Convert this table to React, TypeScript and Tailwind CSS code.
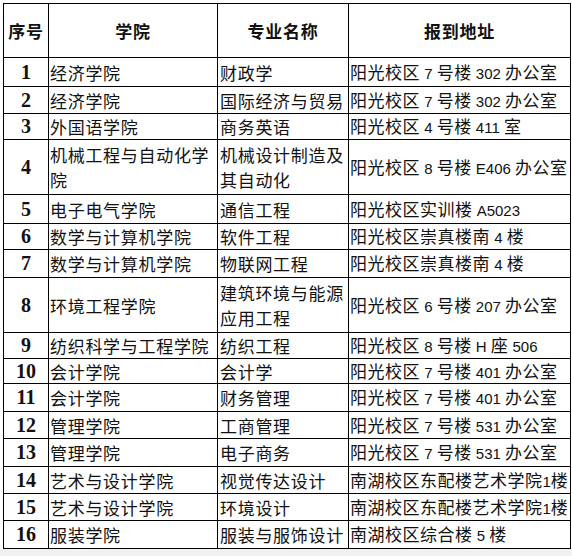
const rows = [
  { no: "1", college: "经济学院", major: "财政学", addr: "阳光校区 7 号楼 302 办公室", h: "h-[29px]" },
  { no: "2", college: "经济学院", major: "国际经济与贸易", addr: "阳光校区 7 号楼 302 办公室", h: "h-[27px]" },
  { no: "3", college: "外国语学院", major: "商务英语", addr: "阳光校区 4 号楼 411 室", h: "h-[26px]" },
  { no: "4", college: "机械工程与自动化学院", major: "机械设计制造及其自动化", addr: "阳光校区 8 号楼 E406 办公室", h: "h-[55px]" },
  { no: "5", college: "电子电气学院", major: "通信工程", addr: "阳光校区实训楼 A5023", h: "h-[29px]" },
  { no: "6", college: "数学与计算机学院", major: "软件工程", addr: "阳光校区崇真楼南 4 楼", h: "h-[26px]" },
  { no: "7", college: "数学与计算机学院", major: "物联网工程", addr: "阳光校区崇真楼南 4 楼", h: "h-[28px]" },
  { no: "8", college: "环境工程学院", major: "建筑环境与能源应用工程", addr: "阳光校区 6 号楼 207 办公室", h: "h-[55px]" },
  { no: "9", college: "纺织科学与工程学院", major: "纺织工程", addr: "阳光校区 8 号楼 H 座 506", h: "h-[26px]" },
  { no: "10", college: "会计学院", major: "会计学", addr: "阳光校区 7 号楼 401 办公室", h: "h-[25px]" },
  { no: "11", college: "会计学院", major: "财务管理", addr: "阳光校区 7 号楼 401 办公室", h: "h-[28px]" },
  { no: "12", college: "管理学院", major: "工商管理", addr: "阳光校区 7 号楼 531 办公室", h: "h-[27px]" },
  { no: "13", college: "管理学院", major: "电子商务", addr: "阳光校区 7 号楼 531 办公室", h: "h-[28px]" },
  { no: "14", college: "艺术与设计学院", major: "视觉传达设计", addr: "南湖校区东配楼艺术学院1楼", h: "h-[27px]" },
  { no: "15", college: "艺术与设计学院", major: "环境设计", addr: "南湖校区东配楼艺术学院1楼", h: "h-[27px]" },
  { no: "16", college: "服装学院", major: "服装与服饰设计", addr: "南湖校区综合楼 5 楼", h: "h-[28px]" },
];

const cjk = "font-['Noto_Sans_CJK_SC',sans-serif]";

// latin runs get a narrower half-width look, like the original sheet
function Addr({ text }: { text: string }) {
  const parts = text.split(/([A-Za-z0-9 ]+)/).filter(Boolean);
  return (
    <>
      {parts.map((p, i) =>
        /^[A-Za-z0-9 ]+$/.test(p) ? (
          <span key={i} className="font-['Liberation_Sans',sans-serif] text-[15px] tracking-normal whitespace-pre">
            {p}
          </span>
        ) : (
          <span key={i}>{p}</span>
        )
      )}
    </>
  );
}

export default function App() {
  return (
    <div className="w-[572px] h-[556px] bg-white flex flex-col overflow-hidden">
      <div className={`ml-[3px] mt-[3px] w-fit border-l border-t border-black text-[17px] tracking-[0.7px] text-[#111] ${cjk}`}>
        <div className="flex h-[54px] border-b border-black font-bold">
          <div className="w-[45px] border-r border-black flex items-center justify-center">序号</div>
          <div className="w-[169px] border-r border-black flex items-center justify-center">学院</div>
          <div className="w-[131px] border-r border-black flex items-center justify-center">专业名称</div>
          <div className="w-[222px] border-r border-black flex items-center justify-center">报到地址</div>
        </div>
        {rows.map((r) => (
          <div key={r.no} className={`flex ${r.h} border-b border-black leading-[25px]`}>
            <div className="w-[45px] border-r border-black flex items-center justify-center font-['Liberation_Serif',serif] font-bold text-[20px] tracking-normal">
              {r.no}
            </div>
            <div className="w-[169px] border-r border-black flex items-center pl-[1px]">{r.college}</div>
            <div className="w-[131px] border-r border-black flex items-center pl-[2px]">{r.major}</div>
            <div className="w-[222px] border-r border-black flex items-center pl-[1px] tracking-[0.5px] whitespace-nowrap overflow-hidden">
              <span>
                <Addr text={r.addr} />
              </span>
            </div>
          </div>
        ))}
      </div>
      <div className="flex-1 bg-[#f0f0f0]" />
    </div>
  );
}
